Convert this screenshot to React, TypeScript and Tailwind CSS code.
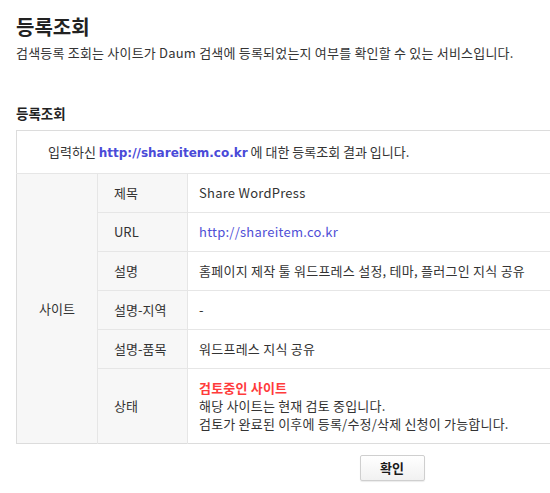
import React from "react";

const font = { fontFamily: '"Noto Sans CJK KR", "Liberation Sans", sans-serif' };
const linkFont = { fontFamily: '"DejaVu Sans", "Liberation Sans", sans-serif' };

const rows: { label: string; value: React.ReactNode }[] = [
  { label: "제목", value: "Share WordPress" },
  { label: "URL", value: <span className="text-[#4f4fd6]">http://shareitem.co.kr</span> },
  { label: "설명", value: "홈페이지 제작 툴 워드프레스 설정, 테마, 플러그인 지식 공유" },
  { label: "설명-지역", value: "-" },
  { label: "설명-품목", value: "워드프레스 지식 공유" },
];

export default function App() {
  return (
    <div
      className="w-[550px] h-[493px] overflow-hidden bg-white text-[#333] text-[13px]"
      style={font}
    >
      <div className="w-[752px] ml-4">
        <h1 className="pt-[12px] text-[20px] leading-[30px] font-bold text-[#222]">등록조회</h1>
        <p className="mt-[3px] text-[13px] leading-[16px] tracking-[0.2px] text-[#333]">
          검색등록 조회는 사이트가 Daum 검색에 등록되었는지 여부를 확인할 수 있는 서비스입니다.
        </p>
        <h2 className="mt-[44px] text-[13.5px] leading-[16px] font-bold text-[#222]">등록조회</h2>

        <table className="mt-[9px] w-full border-collapse border border-[#dcdcdc]">
          <tbody>
            <tr>
              <td colSpan={3} className="h-[43px] pl-[31px] border-b border-[#e6e6e6]">
                입력하신{" "}
                <b className="text-[#4a4ad8] font-bold text-[12px]" style={linkFont}>
                  http://shareitem.co.kr
                </b>{" "}
                에 대한 등록조회 결과 입니다.
              </td>
            </tr>
            {rows.map((r, i) => (
              <tr key={r.label}>
                {i === 0 && (
                  <td
                    rowSpan={6}
                    className="w-[81px] bg-[#f7f7f7] text-center border-r border-[#e6e6e6]"
                  >
                    사이트
                  </td>
                )}
                <td className="w-[90px] h-[39px] pl-[16px] bg-[#f7f7f7] border-b border-r border-[#e6e6e6]">
                  {r.label}
                </td>
                <td className="pl-[11px] tracking-[0.25px] border-b border-[#e6e6e6]">{r.value}</td>
              </tr>
            ))}
            <tr>
              <td className="h-[75px] pl-[16px] bg-[#f7f7f7] border-r border-[#e6e6e6]">상태</td>
              <td className="pl-[11px] leading-[18px] tracking-[0.2px]">
                <div className="text-[#ff3b3b] font-bold">검토중인 사이트</div>
                <div>해당 사이트는 현재 검토 중입니다.</div>
                <div>검토가 완료된 이후에 등록/수정/삭제 신청이 가능합니다.</div>
              </td>
            </tr>
          </tbody>
        </table>

        <div className="flex justify-center mt-[11px]">
          <button className="w-[65px] h-[26px] rounded-[2px] border border-[#cfcfcf] bg-gradient-to-b from-white to-[#f1f1f1] shadow-[0_1px_1px_rgba(0,0,0,0.08)] text-[13px] font-bold text-[#1a1a1a]">
            확인
          </button>
        </div>
      </div>
    </div>
  );
}
